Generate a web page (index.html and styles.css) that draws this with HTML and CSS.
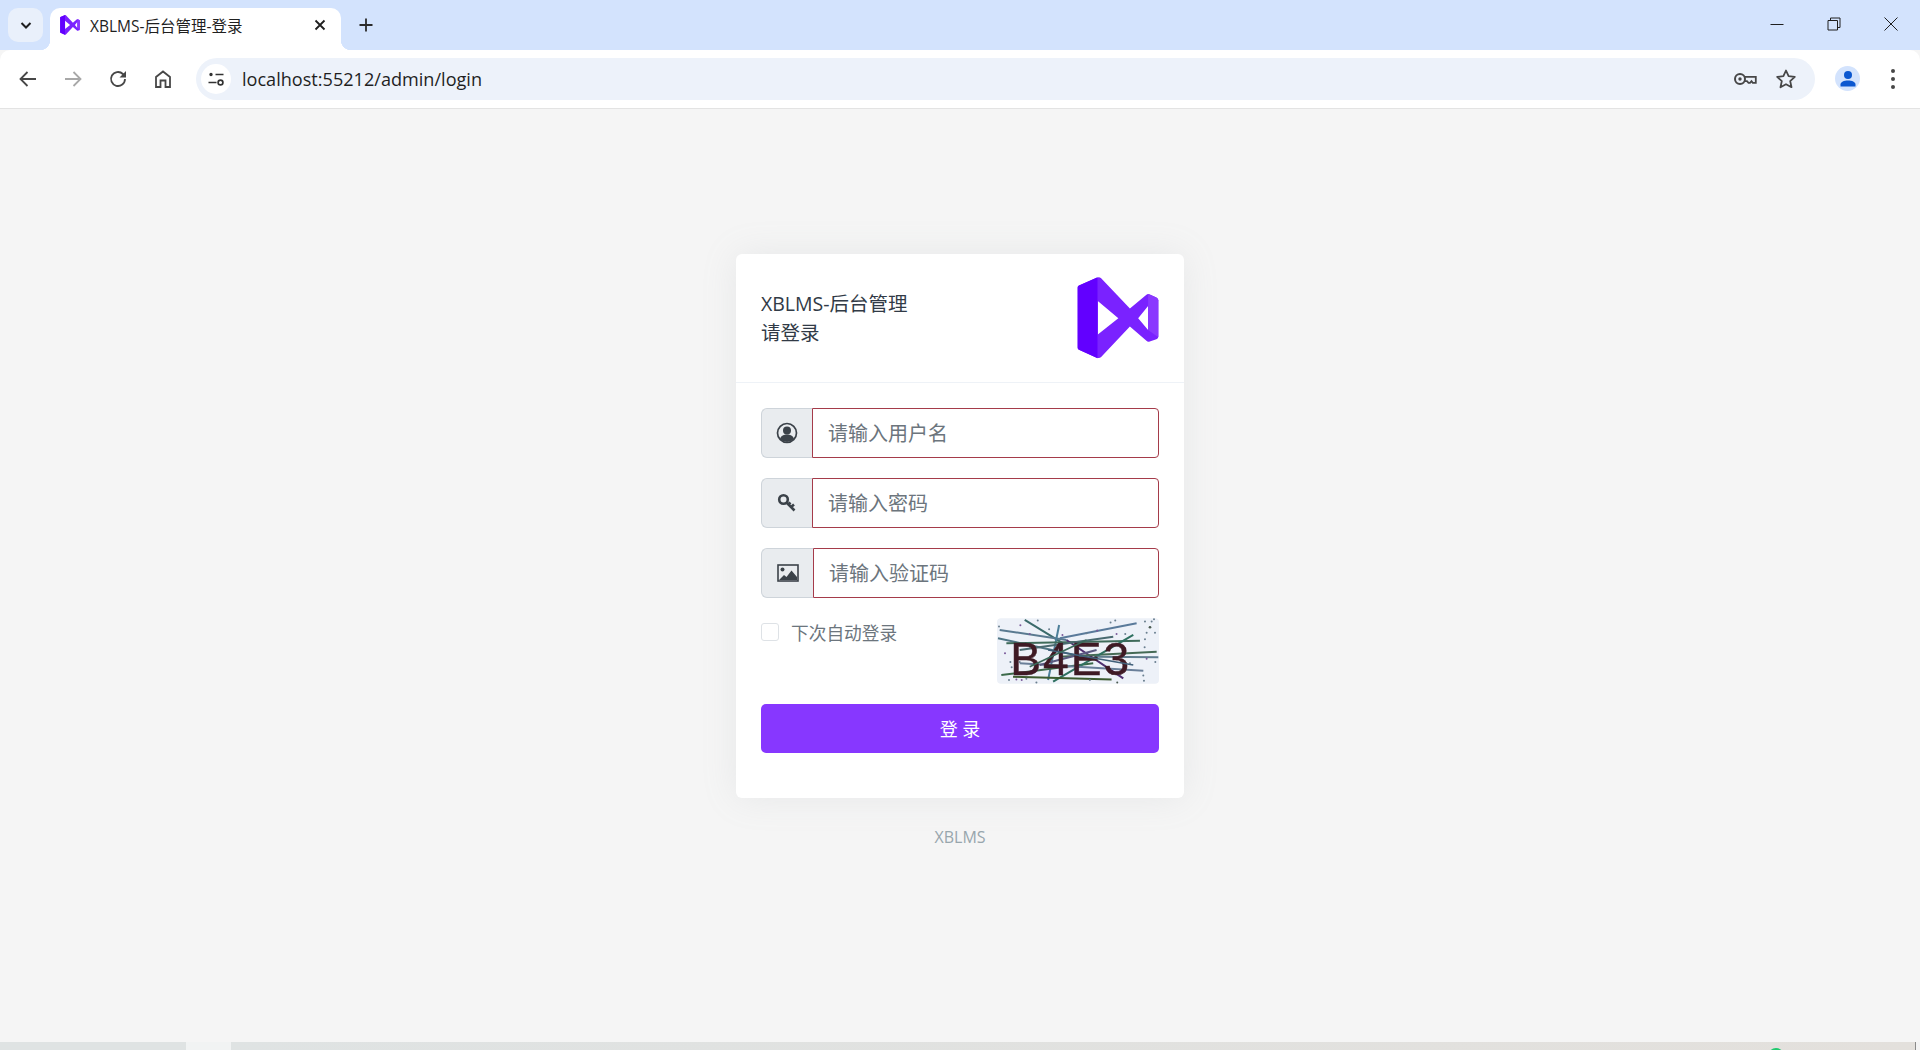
FILE: index.html
```html
<!DOCTYPE html>
<html>
<head>
    <title>XBLMS-后台管理-登录</title>
    <link rel="stylesheet" href="styles.css">
</head>
<body>
    <svg class="defs" width="0" height="0">
        <symbol id="logo" viewBox="1040 80 248 248">
            <path fill="#7a22ff" fill-rule="evenodd" d="M1042 112Q1042 108 1046 106L1100 82Q1108 79 1113 84L1200 175L1250 134Q1254 130 1260 133L1280 142Q1286 145 1286 150V260Q1286 266 1280 268L1260 275Q1254 277 1250 273L1200 230L1113 322Q1108 327 1100 324L1046 300Q1042 298 1042 294ZM1102 152V255L1165 205ZM1255 168L1225 205L1255 240Z"/>
            <path fill="#6200ff" fill-rule="evenodd" d="M1042 112Q1042 108 1046 106L1102 81V326L1046 300Q1042 298 1042 294ZM1102 152V255L1103 255V152Z"/>
            <path fill="#8a38ff" d="M1255 132L1260 133L1280 142Q1286 145 1286 150V262L1255 240V168Z"/>
        </symbol>
    </svg>

    <header class="tabstrip">
        <button class="tab-list">
            <svg width="16" height="16" viewBox="0 0 16 16"><path d="M3.5 6l4.5 4.5L12.5 6" fill="none" stroke="#1f1f1f" stroke-width="2"/></svg>
        </button>
        <div class="tab">
            <svg class="tab-icon" width="20" height="20"><use href="#logo"/></svg>
            <span class="tab-title">XBLMS-后台管理-登录</span>
            <svg width="12" height="12" viewBox="0 0 12 12"><path d="M1.5 1.5l9 9M10.5 1.5l-9 9" stroke="#1f1f1f" stroke-width="1.8"/></svg>
        </div>
        <svg class="new-tab" width="16" height="16" viewBox="0 0 16 16"><path d="M8 1.5v13M1.5 8h13" stroke="#2b2b2b" stroke-width="1.8"/></svg>
        <div class="window-controls">
            <svg width="14" height="14" viewBox="0 0 14 14"><path d="M0.5 7.5h13" stroke="#1f1f1f" stroke-width="1"/></svg>
            <svg width="14" height="14" viewBox="0 0 14 14"><path d="M1 3.5h9.5v9.5H1zM3.5 3.5V1H13v9.5h-2.5" fill="none" stroke="#1f1f1f" stroke-width="1"/></svg>
            <svg width="14" height="14" viewBox="0 0 14 14"><path d="M0.5 0.5l13 13M13.5 0.5l-13 13" stroke="#1f1f1f" stroke-width="1"/></svg>
        </div>
    </header>

    <nav class="toolbar">
        <div class="nav-buttons">
            <svg width="24" height="24" viewBox="0 0 24 24"><path d="M20 12H5M11.5 5l-7 7 7 7" fill="none" stroke="#474747" stroke-width="1.8"/></svg>
            <svg width="24" height="24" viewBox="0 0 24 24"><path d="M4 12h15M12.5 5l7 7-7 7" fill="none" stroke="#a8a8a8" stroke-width="1.8"/></svg>
            <svg width="24" height="24" viewBox="0 0 24 24"><path d="M19 12a7 7 0 1 1-2.100-5L19 9" fill="none" stroke="#474747" stroke-width="1.8"/><path d="M20 4v6.500h-6.500z" fill="#474747"/></svg>
            <svg width="24" height="24" viewBox="0 0 24 24"><path d="M5 20V10l7-5.500 7 5.500v10h-4.500v-6.500h-5V20z" fill="none" stroke="#474747" stroke-width="1.8"/></svg>
        </div>
        <div class="omnibox">
            <span class="site-info">
                <svg width="20" height="20" viewBox="0 0 20 20"><circle cx="5" cy="5.500" r="0.900" fill="#333" stroke="#333" stroke-width="1.600"/><path d="M9.500 5.500h8M2.500 13.500h8" stroke="#333" stroke-width="1.700" fill="none"/><circle cx="14.500" cy="13.500" r="2.400" fill="none" stroke="#333" stroke-width="1.700"/></svg>
            </span>
            <span class="url">localhost:55212/admin/login</span>
            <svg class="omni-key" width="24" height="24" viewBox="0 0 24 24"><circle cx="7" cy="12" r="5" fill="none" stroke="#474747" stroke-width="2"/><circle cx="7" cy="12" r="1.700" fill="#474747"/><path d="M12 9.800H22.800V15.800H19.800L18.500 14.200L17 15.800H15.500L14 14.200H12" fill="none" stroke="#474747" stroke-width="1.800"/></svg>
            <svg width="24" height="24" viewBox="0 0 24 24"><path d="M12 3.500l2.600 5.700 6.200.7-4.600 4.200 1.300 6.100L12 17.200l-5.500 3 1.300-6.100-4.600-4.200 6.200-.7z" fill="none" stroke="#474747" stroke-width="1.800" stroke-linejoin="round"/></svg>
        </div>
        <span class="avatar">
            <svg width="18" height="18" viewBox="0 0 18 18"><circle cx="9" cy="5" r="4" fill="#0b57d0"/><path d="M1.500 16.500V14.500C1.500 12 5 10.500 9 10.500s7.500 1.500 7.500 4v2z" fill="#0b57d0"/></svg>
        </span>
        <span class="menu-dots"><i></i><i></i><i></i></span>
    </nav>

    <main class="page">
        <section class="card">
            <div class="card-head">
                <div class="card-title">
                    <div>XBLMS-后台管理</div>
                    <div>请登录</div>
                </div>
                <svg width="82" height="82"><use href="#logo"/></svg>
            </div>
            <form class="card-body">
                <div class="field">
                    <span class="field-icon">
                        <svg width="22" height="22" viewBox="0 0 22 22"><circle cx="11" cy="11" r="9.500" fill="none" stroke="#3b4249" stroke-width="1.700"/><circle cx="11" cy="8.500" r="4" fill="#3b4249"/><path d="M4 17c1-3.500 4-4.500 7-4.500s6 1 7 4.500a9.500 9.500 0 0 1-14 0z" fill="#3b4249"/></svg>
                    </span>
                    <input class="field-input" type="text" placeholder="请输入用户名">
                </div>
                <div class="field">
                    <span class="field-icon">
                        <svg width="22" height="22" viewBox="0 0 22 22"><circle cx="7.500" cy="7.500" r="4.300" fill="none" stroke="#3b4249" stroke-width="2.600"/><path d="M10.500 10.500l8 8M15 15l3-2.500M12.500 12.500l2-2" fill="none" stroke="#3b4249" stroke-width="2.600"/></svg>
                    </span>
                    <input class="field-input" type="text" placeholder="请输入密码">
                </div>
                <div class="field">
                    <span class="field-icon field-icon-wide">
                        <svg width="22" height="18" viewBox="0 0 22 18"><rect x="1" y="1" width="20" height="16" fill="none" stroke="#3b4249" stroke-width="1.600"/><circle cx="5.500" cy="5.500" r="2" fill="#3b4249"/><path d="M2 16l5-5 2.500 2 5-6.500 5.500 6.500v3z" fill="#3b4249"/></svg>
                    </span>
                    <input class="field-input" type="text" placeholder="请输入验证码">
                </div>
                <div class="extras">
                    <label class="remember"><span class="checkbox"></span>下次自动登录</label>
                    <svg class="captcha" width="162" height="66" viewBox="52 55 485 196">
                        <rect x="52" y="55" width="485" height="196" rx="12" fill="#edf1f8"/>
                        <g fill="none" stroke-width="6">
                            <path d="M135 60L250 130" stroke="#3a6a6a"/>
                            <path d="M60 90L260 120" stroke="#5a7a90"/>
                            <path d="M240 115L470 70" stroke="#5a7a9a"/>
                            <path d="M238 75L205 240" stroke="#4d7f99"/>
                            <path d="M55 115L310 170" stroke="#4f7585"/>
                            <path d="M80 130L480 122" stroke="#3f6b5a"/>
                            <path d="M260 120L430 235" stroke="#503070"/>
                            <path d="M240 170L530 155" stroke="#456a55"/>
                            <path d="M65 225L340 190" stroke="#3c6a4a"/>
                            <path d="M220 245L460 105" stroke="#2f7060"/>
                            <path d="M100 230L395 238" stroke="#3c5a30"/>
                            <path d="M120 190L490 212" stroke="#6a7f99"/>
                            <path d="M350 170L535 172" stroke="#607d8f"/>
                            <path d="M120 150L400 110" stroke="#4a6a70"/>
                            <path d="M180 195L350 150" stroke="#5a5a80"/>
                        </g>
                        <text class="captcha-text" x="92" y="225">B4E3</text>
                        <g fill="none" stroke-width="5">
                            <path d="M205 150L460 195" stroke="#40607a"/>
                            <path d="M150 200L320 120" stroke="#3a6a5a"/>
                        </g>
                        <g fill="#6a7f8f">
                            <circle cx="58" cy="80" r="3"/><circle cx="122" cy="76" r="3" fill="#7a5a9a"/><circle cx="174" cy="62" r="3"/><circle cx="208" cy="88" r="3"/><circle cx="150" cy="102" r="3" fill="#7a5a9a"/>
                            <circle cx="392" cy="68" r="3"/><circle cx="406" cy="62" r="3"/><circle cx="352" cy="92" r="3" fill="#7a5a9a"/><circle cx="410" cy="102" r="3" fill="#7a5a9a"/><circle cx="436" cy="102" r="3"/>
                            <circle cx="495" cy="65" r="3"/><circle cx="515" cy="65" r="3"/><circle cx="522" cy="58" r="3"/><circle cx="510" cy="82" r="4" fill="#4a5a50"/><circle cx="500" cy="98" r="3"/><circle cx="525" cy="98" r="3"/>
                            <circle cx="495" cy="118" r="3"/><circle cx="76" cy="160" r="3" fill="#7a5a9a"/><circle cx="92" cy="186" r="3"/><circle cx="120" cy="186" r="3"/><circle cx="96" cy="202" r="3"/>
                            <circle cx="88" cy="240" r="3"/><circle cx="110" cy="238" r="3" fill="#7a5a9a"/><circle cx="126" cy="240" r="3" fill="#7a5a9a"/><circle cx="140" cy="236" r="3"/><circle cx="170" cy="247" r="3"/>
                            <circle cx="330" cy="240" r="3"/><circle cx="412" cy="247" r="3" fill="#4a5a50"/><circle cx="490" cy="226" r="3"/><circle cx="492" cy="242" r="3"/><circle cx="500" cy="176" r="3" fill="#7a5a9a"/><circle cx="526" cy="186" r="3"/>
                            <circle cx="494" cy="142" r="3"/><circle cx="450" cy="190" r="3"/><circle cx="248" cy="105" r="3" fill="#7a5a9a"/><circle cx="320" cy="100" r="3"/>
                        </g>
                    </svg>
                </div>
                <button class="submit" type="button">登 录</button>
            </form>
        </section>
        <footer class="page-foot">XBLMS</footer>
    </main>

    <div class="taskbar">
        <span class="taskbar-left"></span>
        <span class="taskbar-gap"></span>
        <span class="taskbar-main"><i class="taskbar-dot"></i></span>
        <span class="taskbar-end"></span>
    </div>
</body>
</html>
```

FILE: styles.css
```css
* { box-sizing: border-box; }
html, body { height: 100%; }
body { margin: 0; display: flex; flex-direction: column; overflow: hidden; background: #f5f5f5; font-family: "Open Sans", "Noto Sans CJK SC", sans-serif; color: #313a46; }
.defs { position: absolute; }

/* browser chrome */
.tabstrip { height: 50px; flex: none; display: flex; align-items: flex-end; padding-left: 8px; background: #d3e3fd; }
.tab-list { width: 35px; height: 34px; margin-bottom: 8px; padding: 0; border: none; border-radius: 10px; background: #e9f0fb; display: flex; align-items: center; justify-content: center; }
.tab { position: relative; width: 291px; height: 42px; margin-left: 7px; padding: 0 15px 8px 10px; display: flex; align-items: center; background: #fff; border-radius: 10px 10px 0 0; }
.tab::before, .tab::after { content: ""; position: absolute; bottom: 0; width: 10px; height: 10px; }
.tab::before { left: -10px; background: radial-gradient(circle at 0 0, #d3e3fd 10px, #fff 10.5px); }
.tab::after { right: -10px; background: radial-gradient(circle at 100% 0, #d3e3fd 10px, #fff 10.5px); }
.tab-icon { flex: none; }
.tab-title { flex: 1; margin-left: 10px; font-size: 15.5px; color: #1f1f1f; white-space: nowrap; }
.new-tab { margin: 0 0 17px 17px; }
.window-controls { margin-left: auto; margin-bottom: 19px; padding-right: 22px; display: flex; gap: 43px; }

.toolbar { height: 59px; flex: none; display: flex; align-items: center; padding: 0 16px 1px 16px; background: #fff; border-bottom: 1px solid #e3e3e3; border-radius: 10px 10px 0 0; }
.nav-buttons { display: flex; gap: 21px; }
.omnibox { width: 1619px; height: 42px; margin-left: 21px; padding: 0 17px 0 3px; display: flex; align-items: center; gap: 17px; background: #edf2fa; border-radius: 21px; }
.site-info { width: 30px; height: 30px; flex: none; margin-left: 2px; display: flex; align-items: center; justify-content: center; background: #fff; border-radius: 50%; }
.url { flex: 1; margin-left: -6px; font-size: 18.1px; color: #1f1f1f; }
.avatar { width: 25px; height: 25px; margin-left: 20px; display: flex; align-items: center; justify-content: center; background: #d3e3fd; border-radius: 50%; }
.menu-dots { margin-left: 31px; display: flex; flex-direction: column; gap: 4px; }
.menu-dots i { width: 4px; height: 4px; background: #474747; border-radius: 50%; }

/* login */
.page { flex: 1; display: flex; flex-direction: column; align-items: center; padding-top: 145px; }
.card { width: 448px; height: 544px; background: #fff; border-radius: 6px; box-shadow: 0 0 35px rgba(154, 161, 171, .15); }
.card-head { height: 129px; padding: 0 25px; display: flex; align-items: center; justify-content: space-between; border-bottom: 1px solid #eef2f7; }
.card-title { padding-bottom: 1px; font-size: 19.5px; line-height: 29px; color: #313a46; }
.card-body { padding: 25px; display: flex; flex-direction: column; }
.field { height: 50px; margin-bottom: 20px; display: flex; }
.field-icon { width: 51px; flex: none; display: flex; align-items: center; justify-content: center; background: #e9ecef; border: 1px solid #ced4da; border-right: none; border-radius: 6px 0 0 6px; }
.field-icon-wide { width: 52px; }
.field-input { flex: 1; min-width: 0; padding: 0 15px; font: inherit; font-size: 20px; border: 1px solid #a53b4a; border-radius: 0 4px 4px 0; background: #fff; outline: none; }
.field-input::placeholder { color: #6c757d; opacity: 1; }
.extras { display: flex; justify-content: space-between; }
.remember { margin-top: 1px; display: flex; align-items: flex-start; font-size: 17.7px; line-height: 28px; color: #6c757d; }
.checkbox { width: 18px; height: 18px; margin: 4px 12px 0 0; border: 1px solid #dee2e6; border-radius: 3px; background: #fff; }
.captcha { display: block; filter: blur(.5px); }
.captcha-text { font-family: "Liberation Sans", sans-serif; font-size: 138px; letter-spacing: 6px; fill: #3f1a24; stroke: #3f1a24; stroke-width: 1.5px; }
.submit { height: 49px; margin-top: 20px; padding: 0 0 2px; font: inherit; font-size: 18px; color: #fff; background: #8737ff; border: none; border-radius: 5px; }
.page-foot { margin-top: 29px; font-size: 16px; line-height: 20px; color: #98a6ad; }

/* whatever sits behind the window */
.taskbar { height: 8px; flex: none; display: flex; }
.taskbar-left { width: 186px; background: #dfe3e3; }
.taskbar-gap { width: 45px; background: #f1f3f3; }
.taskbar-main { position: relative; flex: 1; background: linear-gradient(90deg, #dfe3e3, #e3e0dc); overflow: hidden; }
.taskbar-dot { position: absolute; left: 1537px; top: 6px; width: 16px; height: 16px; background: #1fc96e; border-radius: 50%; }
.taskbar-end { width: 5px; background: #f3f3f3; border-left: 1px solid #8a8a8a; }
```
